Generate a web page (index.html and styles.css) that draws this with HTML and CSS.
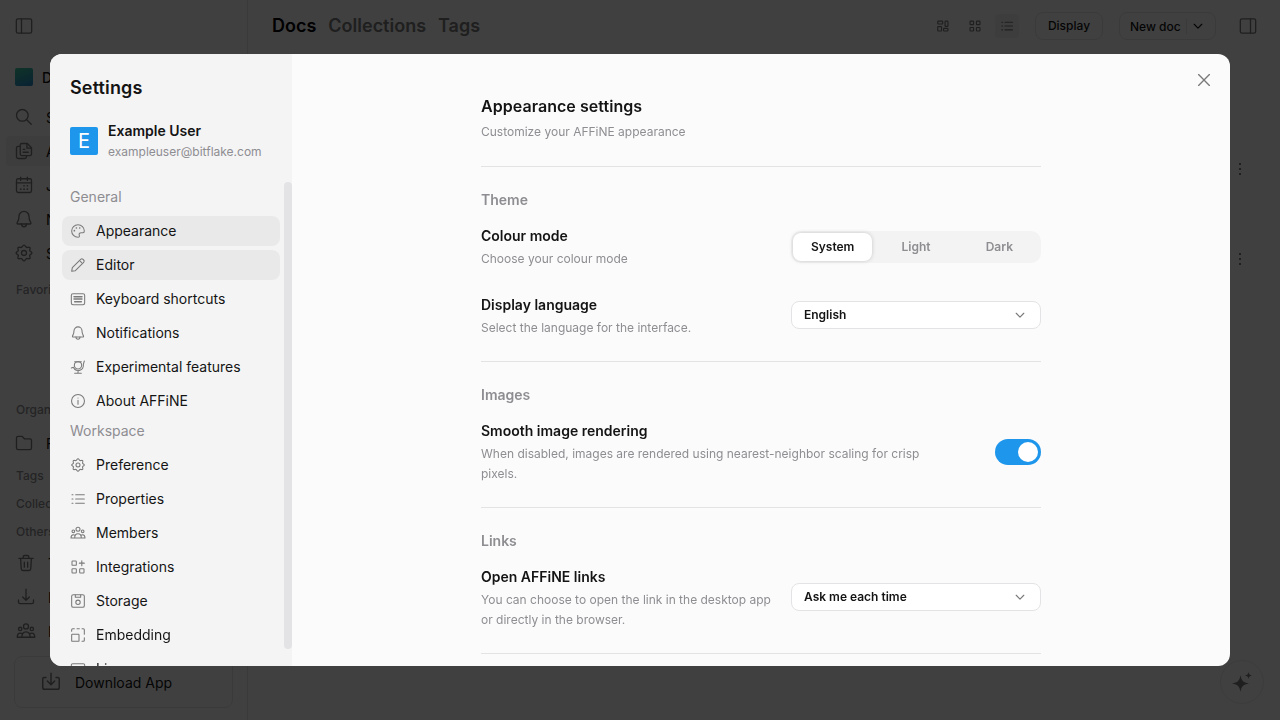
FILE: index.html
```html
<!DOCTYPE html>
<html lang="en">
<head>
    <meta charset="UTF-8">
    <meta name="viewport" content="width=device-width, initial-scale=1.0">
    <title>AFFiNE</title>
    <link rel="stylesheet" href="styles.css">
</head>
<body>
    <!-- icon set -->
    <svg class="sprite">
        <symbol id="i-panel-left" viewBox="0 0 24 24"><rect x="2.8" y="3.500" width="18.4" height="17" rx="2"/><path d="M9 3.500v17"/></symbol>
        <symbol id="i-panel-right" viewBox="0 0 24 24"><rect x="2.8" y="3.500" width="18.4" height="17" rx="2"/><path d="M15 3.500v17"/></symbol>
        <symbol id="i-search" viewBox="0 0 24 24"><circle cx="10" cy="10" r="7"/><path d="M15.2 15.2l5.500 5.500"/></symbol>
        <symbol id="i-docs" viewBox="0 0 24 24"><path d="M7 6.500H5a2 2 0 0 0-2 2V19a2 2 0 0 0 2 2h8a2 2 0 0 0 2-2v-1.500"/><path d="M9.500 3H16l5 5v7.500a2 2 0 0 1-2 2H9.500a2 2 0 0 1-2-2V5a2 2 0 0 1 2-2z"/><path d="M15.500 3.500v5h5M11 10h2M11 13.500h6"/></symbol>
        <symbol id="i-journal" viewBox="0 0 24 24"><rect x="3" y="4.500" width="18" height="16.500" rx="2"/><path d="M3 9.500h18M8 2.500v4M16 2.500v4"/><path d="M12 13h.1M16 13h.1M8 17h.1M12 17h.1M16 17h.1" stroke-width="2"/></symbol>
        <symbol id="i-bell" viewBox="0 0 24 24"><path d="M12 2.800a6 6 0 0 0-6 6c0 5-1.500 6.200-2.200 7.500-.4.900 0 1.700 1 1.700h14.400c1 0 1.400-.8 1-1.700C19.500 15 18 13.800 18 8.800a6 6 0 0 0-6-6z"/><path d="M9 18c0 2 1.200 3.300 3 3.300s3-1.300 3-3.300"/></symbol>
        <symbol id="i-gear" viewBox="0 0 24 24"><path d="M12 2.500c1.500 0 1.900 2.300 3 2.800s3-.9 4 .1-.6 2.900-.1 4 2.600 1.100 2.600 2.600-2.100 1.500-2.600 2.600 1.100 3 .1 4-2.900-.4-4 .1-1.500 2.800-3 2.800-1.900-2.300-3-2.800-3 .9-4-.1.600-2.900.1-4-2.600-1.100-2.600-2.600 2.100-1.500 2.600-2.600-1.100-3-.1-4 2.900.4 4-.1 1.500-2.800 3-2.800z"/><circle cx="12" cy="12" r="3"/></symbol>
        <symbol id="i-folder" viewBox="0 0 24 24"><path d="M3 6a2 2 0 0 1 2-2h4.500l3 3H19a2 2 0 0 1 2 2v9a2 2 0 0 1-2 2H5a2 2 0 0 1-2-2z"/></symbol>
        <symbol id="i-trash" viewBox="0 0 24 24"><path d="M3.500 6.500h17M5.500 6.500l.8 12.500a2 2 0 0 0 2 2h7.400a2 2 0 0 0 2-2l.8-12.500M8.500 6.500V5a2 2 0 0 1 2-2h3a2 2 0 0 1 2 2v1.500M10 11v6M14 11v6"/></symbol>
        <symbol id="i-import" viewBox="0 0 24 24"><path d="M12 2.500v13M8 12l4 4 4-4M3 15.500V18a2 2 0 0 0 2 2h14a2 2 0 0 0 2-2v-2.500"/></symbol>
        <symbol id="i-download" viewBox="0 0 24 24"><path d="M12 2.500v12M8 11l4 4 4-4M6.500 7H4.500A1.500 1.500 0 0 0 3 8.500V18a2 2 0 0 0 2 2h14a2 2 0 0 0 2-2V8.500A1.500 1.500 0 0 0 19.500 7H17.500"/></symbol>
        <symbol id="i-people" viewBox="0 0 24 24"><circle cx="12" cy="6.500" r="3"/><circle cx="5" cy="9.500" r="2"/><circle cx="19" cy="9.500" r="2"/><path d="M7 19.500c0-4 2-6.500 5-6.500s5 2.500 5 6.500zM7 19.500H1.500c0-3 1.300-5 3.500-5 1 0 1.900.3 2.500 1M17 19.500h5.500c0-3-1.300-5-3.500-5-1 0-1.900.3-2.500 1"/></symbol>
        <symbol id="i-masonry" viewBox="0 0 24 24"><rect x="3" y="3.500" width="8.500" height="5" rx="1"/><rect x="3" y="13" width="6.500" height="7.500" rx="1"/><rect x="15.500" y="3.500" width="5" height="9" rx="1"/><rect x="13" y="16" width="7.500" height="4.500" rx="1"/></symbol>
        <symbol id="i-grid" viewBox="0 0 24 24"><rect x="3.500" y="3.500" width="6" height="6" rx="1"/><rect x="14.500" y="3.500" width="6" height="6" rx="1"/><rect x="3.500" y="14.500" width="6" height="6" rx="1"/><rect x="14.500" y="14.500" width="6" height="6" rx="1"/></symbol>
        <symbol id="i-list" viewBox="0 0 24 24"><path d="M8.500 5.500h13M8.500 12h13M8.500 18.500h13M3 5.500h1.500M3 12h1.500M3 18.500h1.500"/></symbol>
        <symbol id="i-down" viewBox="0 0 24 24"><path d="M5.500 9l6.500 6.500L18.500 9"/></symbol>
        <symbol id="i-close" viewBox="0 0 24 24"><path d="M5.500 5.500l13 13M18.500 5.500l-13 13"/></symbol>
        <symbol id="i-dots" viewBox="0 0 16 16"><path class="solid" d="M7 2h2v2H7zM7 7h2v2H7zM7 12h2v2H7z"/></symbol>
        <symbol id="i-palette" viewBox="0 0 24 24"><path d="M12 2.500a9.500 9.500 0 0 0 0 19c2 0 2.500-1.300 2-2.700-1-2.800.3-4.300 3-4.300h2.500c1.300 0 2-.9 2-2.500A9.500 9.500 0 0 0 12 2.500z"/><path d="M6.500 11.500h.1M9.500 7.500h.1M14.500 7.500h.1" stroke-width="2.500"/></symbol>
        <symbol id="i-pencil" viewBox="0 0 24 24"><path d="M3.500 16L16 3.500a2.500 2.500 0 0 1 3.500 0l1 1a2.500 2.500 0 0 1 0 3.500L8 20.500l-5.500 1zM15.500 6.500l2 2"/></symbol>
        <symbol id="i-keyboard" viewBox="0 0 24 24"><rect x="2" y="4" width="20" height="16.500" rx="2.500"/><path d="M6 8.500h12M6 12h12M7 16h10" stroke-width="2.200"/></symbol>
        <symbol id="i-lab" viewBox="0 0 24 24"><circle cx="12" cy="9.500" r="5.500"/><path d="M2 13.500l3-1c2 4.500 6.500 6 10 4.500 4-1.700 5.500-5 5-9l1.500-5M7 4h10M12 17.500V21M7 21.500h10"/></symbol>
        <symbol id="i-info" viewBox="0 0 24 24"><circle cx="12" cy="12" r="9.700"/><path d="M12 11v6M12 7.500v.1"/></symbol>
        <symbol id="i-integrations" viewBox="0 0 24 24"><rect x="3" y="3" width="6.500" height="6.500" rx="1"/><rect x="3" y="14.500" width="6.500" height="6.500" rx="1"/><rect x="14.500" y="14.500" width="6.500" height="6.500" rx="1"/><path d="M17.700 2.500v7.500M14 6.200h7.500"/></symbol>
        <symbol id="i-storage" viewBox="0 0 24 24"><rect x="2.500" y="2.500" width="19" height="19" rx="2.500"/><circle cx="12" cy="14" r="3.300"/><path d="M8 3v3.500h8V3"/></symbol>
        <symbol id="i-embed" viewBox="0 0 24 24"><rect x="2.500" y="11" width="11" height="10.500" rx="1"/><path d="M2.500 6.500V4A1.500 1.500 0 0 1 4 2.500h2.500M10.500 2.500h3.500M18 2.500h2A1.500 1.500 0 0 1 21.500 4v7M21.500 16v4a1.500 1.500 0 0 1-1.500 1.500h-2"/></symbol>
        <symbol id="i-license" viewBox="0 0 24 24"><rect x="2" y="4" width="20" height="16" rx="2"/><path d="M6 9h12"/></symbol>
        <symbol id="i-ai" viewBox="0 0 24 24"><path class="solid" d="M10.500 5c1 5.800 2.700 7.500 8.500 8.500-5.800 1-7.500 2.700-8.500 8.500-1-5.800-2.700-7.500-8.500-8.500 5.800-1 7.500-2.700 8.500-8.500zM18.500 2c.5 2.400 1.100 3 3.500 3.500-2.400.5-3 1.100-3.500 3.500-.5-2.400-1.100-3-3.500-3.500 2.400-.5 3-1.100 3.500-3.500z"/></symbol>
    </svg>

    <!-- app behind the dialog -->
    <div class="app">
        <aside class="nav">
            <div class="nav-top"><svg class="icon icon-20"><use href="#i-panel-left"/></svg></div>
            <div class="workspace"><span class="workspace-avatar"></span><b>Demo</b></div>
            <div class="nav-list">
                <a class="nav-item"><svg class="icon icon-20"><use href="#i-search"/></svg>Search</a>
                <a class="nav-item active"><svg class="icon icon-20"><use href="#i-docs"/></svg>All docs</a>
                <a class="nav-item"><svg class="icon icon-20"><use href="#i-journal"/></svg>Journals</a>
                <a class="nav-item"><svg class="icon icon-20"><use href="#i-bell"/></svg>Notifications</a>
                <a class="nav-item"><svg class="icon icon-20"><use href="#i-gear"/></svg>Settings</a>
            </div>
            <div class="nav-label favorites">Favorites</div>
            <div class="nav-label">Organize</div>
            <a class="nav-item folder"><svg class="icon icon-20"><use href="#i-folder"/></svg>Folder</a>
            <div class="nav-label">Tags</div>
            <div class="nav-label">Collections</div>
            <div class="nav-label">Others</div>
            <div class="nav-list others">
                <a class="nav-item"><svg class="icon icon-20"><use href="#i-trash"/></svg>Trash</a>
                <a class="nav-item"><svg class="icon icon-20"><use href="#i-import"/></svg>Import</a>
                <a class="nav-item"><svg class="icon icon-20"><use href="#i-people"/></svg>Invite</a>
            </div>
            <div class="download"><svg class="icon icon-22"><use href="#i-download"/></svg>Download App</div>
        </aside>
        <main class="main">
            <header class="topbar">
                <div class="tabs"><span class="tab current">Docs</span><span class="tab">Collections</span><span class="tab">Tags</span></div>
                <div class="views">
                    <span class="view"><svg class="icon icon-14"><use href="#i-masonry"/></svg></span>
                    <span class="view"><svg class="icon icon-14"><use href="#i-grid"/></svg></span>
                    <span class="view selected"><svg class="icon icon-14"><use href="#i-list"/></svg></span>
                </div>
                <button class="btn display">Display</button>
                <button class="btn new-doc"><span>New doc</span><svg class="icon icon-14"><use href="#i-down"/></svg></button>
                <svg class="icon icon-20"><use href="#i-panel-right"/></svg>
            </header>
            <div class="rows">
                <svg class="icon icon-16"><use href="#i-dots"/></svg>
                <svg class="icon icon-16"><use href="#i-dots"/></svg>
            </div>
            <div class="ai"><svg class="icon icon-24"><use href="#i-ai"/></svg></div>
        </main>
    </div>

    <!-- settings dialog -->
    <div class="overlay">
        <div class="modal">
            <aside class="sidebar">
                <h1>Settings</h1>
                <div class="user">
                    <span class="avatar">E</span>
                    <div>
                        <div class="user-name">Example User</div>
                        <div class="user-mail">exampleuser@bitflake.com</div>
                    </div>
                </div>
                <div class="menu">
                    <div class="menu-list">
                        <div class="menu-label">General</div>
                        <a class="menu-item active"><svg class="icon icon-16"><use href="#i-palette"/></svg><span>Appearance</span></a>
                        <a class="menu-item active"><svg class="icon icon-16"><use href="#i-pencil"/></svg><span>Editor</span></a>
                        <a class="menu-item"><svg class="icon icon-16"><use href="#i-keyboard"/></svg><span>Keyboard shortcuts</span></a>
                        <a class="menu-item"><svg class="icon icon-16"><use href="#i-bell"/></svg><span>Notifications</span></a>
                        <a class="menu-item"><svg class="icon icon-16"><use href="#i-lab"/></svg><span>Experimental features</span></a>
                        <a class="menu-item"><svg class="icon icon-16"><use href="#i-info"/></svg><span>About AFFiNE</span></a>
                        <div class="menu-label">Workspace</div>
                        <a class="menu-item"><svg class="icon icon-16"><use href="#i-gear"/></svg><span>Preference</span></a>
                        <a class="menu-item"><svg class="icon icon-16"><use href="#i-list"/></svg><span>Properties</span></a>
                        <a class="menu-item"><svg class="icon icon-16"><use href="#i-people"/></svg><span>Members</span></a>
                        <a class="menu-item"><svg class="icon icon-16"><use href="#i-integrations"/></svg><span>Integrations</span></a>
                        <a class="menu-item"><svg class="icon icon-16"><use href="#i-storage"/></svg><span>Storage</span></a>
                        <a class="menu-item"><svg class="icon icon-16"><use href="#i-embed"/></svg><span>Embedding</span></a>
                        <a class="menu-item"><svg class="icon icon-16"><use href="#i-license"/></svg><span>License</span></a>
                    </div>
                    <div class="scrollbar"></div>
                </div>
            </aside>
            <section class="content">
                <button class="close"><svg class="icon icon-20"><use href="#i-close"/></svg></button>
                <div class="page">
                    <div class="page-head">
                        <h2>Appearance settings</h2>
                        <p>Customize your AFFiNE appearance</p>
                    </div>
                    <div class="group">
                        <h3>Theme</h3>
                        <div class="row">
                            <div class="text"><h4>Colour mode</h4><p>Choose your colour mode</p></div>
                            <div class="segmented"><span class="on">System</span><span>Light</span><span>Dark</span></div>
                        </div>
                        <div class="row">
                            <div class="text"><h4>Display language</h4><p>Select the language for the interface.</p></div>
                            <div class="select"><span>English</span><svg class="icon icon-14"><use href="#i-down"/></svg></div>
                        </div>
                    </div>
                    <div class="group">
                        <h3>Images</h3>
                        <div class="row">
                            <div class="text"><h4>Smooth image rendering</h4><p>When disabled, images are rendered using nearest-neighbor scaling for crisp pixels.</p></div>
                            <div class="switch"></div>
                        </div>
                    </div>
                    <div class="group">
                        <h3>Links</h3>
                        <div class="row">
                            <div class="text"><h4>Open AFFiNE links</h4><p>You can choose to open the link in the desktop app or directly in the browser.</p></div>
                            <div class="select"><span>Ask me each time</span><svg class="icon icon-14"><use href="#i-down"/></svg></div>
                        </div>
                    </div>
                    <div class="group"></div>
                </div>
            </section>
        </div>
    </div>
</body>
</html>
```
FILE: styles.css
```css
* {
    box-sizing: border-box;
}
body {
    margin: 0;
    height: 720px;
    overflow: hidden;
    font-family: Inter, "Liberation Sans", sans-serif;
    font-size: 14px;
    color: #141414;
}
h1, h2, h3, h4, p {
    margin: 0;
}
button {
    font-family: inherit;
    color: inherit;
}
.sprite {
    display: none;
}

/* icons */
.icon {
    flex: none;
    display: block;
    fill: none;
    stroke: #7a7a7a;
    stroke-width: 1.6;
    stroke-linecap: round;
    stroke-linejoin: round;
}
.icon-14 { width: 14px; height: 14px; }
.icon-16 { width: 16px; height: 16px; }
.icon-20 { width: 20px; height: 20px; }
.icon-22 { width: 22px; height: 22px; }
.icon-24 { width: 24px; height: 24px; }
.solid {
    fill: #7a7a7a;
    stroke: none;
}

/* app */
.app {
    display: flex;
    height: 720px;
    background-color: #fbfbfc;
}
.nav {
    width: 248px;
    height: 720px;
    flex: none;
    border-right: 1px solid #e3e2e4;
}
.nav-top {
    height: 52px;
    padding: 16px 14px;
}
.workspace {
    display: flex;
    align-items: center;
    gap: 9px;
    height: 50px;
    padding-left: 15px;
    white-space: nowrap;
}
.workspace b {
    font-weight: 500;
}
.workspace-avatar {
    width: 18px;
    height: 18px;
    border-radius: 2px;
    background: linear-gradient(160deg, #3cc79b, #2585c9);
}
.nav-list {
    display: flex;
    flex-direction: column;
    gap: 4px;
    padding: 0 6px;
}
.nav-item {
    display: flex;
    align-items: center;
    gap: 12px;
    height: 30px;
    padding-left: 8px;
    border-radius: 4px;
}
.nav-item.active {
    background-color: #ededee;
}
.nav-label {
    height: 28px;
    padding-left: 16px;
    line-height: 28px;
    font-size: 12px;
    font-weight: 500;
    color: #8e8d91;
}
.favorites {
    margin-top: 8px;
    margin-bottom: 92px;
}
.nav-item.folder {
    margin: 4px 6px;
}
.others {
    margin-top: 2px;
    padding-left: 8px;
}
.download {
    display: flex;
    align-items: center;
    gap: 13px;
    width: 219px;
    height: 52px;
    margin: 10px 0 0 14px;
    padding-left: 25px;
    border: 1px solid #e3e2e4;
    border-radius: 8px;
}
.main {
    flex: 1;
    display: flex;
    flex-direction: column;
}
.topbar {
    display: flex;
    align-items: center;
    height: 52px;
    padding: 0 22px 0 24px;
}
.tabs {
    display: flex;
    gap: 12px;
    margin-right: auto;
    padding-bottom: 1px;
    font-size: 18px;
    font-weight: 600;
}
.tab {
    color: #7a7a7a;
}
.tab.current {
    color: #000;
}
.views {
    display: flex;
    gap: 8px;
    margin-right: 16px;
}
.views .icon {
    stroke-width: 2;
}
.view {
    display: grid;
    place-items: center;
    width: 24px;
    height: 24px;
    border-radius: 4px;
}
.view.selected {
    background-color: #f0f0f1;
}
.btn {
    height: 28px;
    padding: 0 12px;
    border: 1px solid #e3e2e4;
    border-radius: 8px;
    background: none;
    font-size: 12px;
    font-weight: 500;
}
.display {
    width: 68px;
    margin-right: 16px;
    padding: 0 0 1px;
}
.new-doc {
    display: flex;
    align-items: center;
    width: 97px;
    margin-right: 22px;
    padding: 0 10px;
}
.new-doc span {
    margin-right: 4px;
    padding-right: 5px;
    border-right: 1px solid #e3e2e4;
    white-space: nowrap;
}
.new-doc .icon {
    stroke: #141414;
    stroke-width: 2;
}
.rows {
    display: flex;
    flex-direction: column;
    align-items: flex-end;
    gap: 74px;
    padding: 109px 32px 0 0;
}
.ai {
    display: grid;
    place-items: center;
    width: 44px;
    height: 44px;
    margin: auto 16px 16px auto;
    border: 1px solid #e9e9ea;
    border-radius: 50%;
}

/* dialog */
.overlay {
    position: fixed;
    inset: 0;
    display: flex;
    align-items: center;
    justify-content: center;
    background-color: rgba(0, 0, 0, 0.745);
}
.modal {
    display: flex;
    width: 1180px;
    height: 612px;
    overflow: hidden;
    border-radius: 12px;
    background-color: #fbfbfc;
}
.sidebar {
    flex: none;
    display: flex;
    flex-direction: column;
    width: 242px;
    background-color: #f4f4f5;
}
.sidebar h1 {
    height: 46px;
    padding: 20px 20px 0;
    line-height: 27px;
    font-size: 18px;
    font-weight: 600;
    letter-spacing: 0.15px;
}
.user {
    display: flex;
    align-items: center;
    gap: 10px;
    height: 50px;
    margin: 16px 0;
    padding-left: 20px;
}
.avatar {
    width: 28px;
    height: 28px;
    border-radius: 2px;
    background-color: #1e96eb;
    color: #fff;
    font-size: 20px;
    line-height: 28px;
    text-align: center;
}
.user-name {
    line-height: 22px;
    font-size: 14px;
    font-weight: 600;
}
.user-mail {
    line-height: 20px;
    font-size: 12px;
    color: #8e8d91;
}
.menu {
    flex: 1;
    display: flex;
    min-height: 0;
}
.menu-list {
    flex: 1;
    display: flex;
    flex-direction: column;
    padding: 0 4px 0 12px;
}
.menu-label {
    flex: none;
    height: 30px;
    margin-bottom: 4px;
    padding-left: 8px;
    line-height: 30px;
    font-size: 14px;
    color: #8e8d91;
}
.menu-item {
    flex: none;
    display: flex;
    align-items: center;
    gap: 10px;
    height: 30px;
    padding-left: 8px;
    border-radius: 8px;
    font-size: 14px;
}
.menu-item span {
    line-height: 22px;
}
.menu-item + .menu-item {
    margin-top: 4px;
}
.menu-item.active {
    background-color: #e9e9ea;
}
.scrollbar {
    width: 8px;
    height: 467px;
    border-radius: 4px;
    background-color: #e3e2e4;
}
.content {
    position: relative;
    flex: 1;
}
.close {
    position: absolute;
    top: 16px;
    right: 16px;
    padding: 0;
    border: none;
    background: none;
}
.page {
    width: 560px;
    margin-left: 189px;
}
.page-head {
    height: 112px;
    padding-top: 40px;
}
.page-head h2 {
    line-height: 24px;
    font-size: 16px;
    font-weight: 600;
    letter-spacing: 0.05px;
}
.page-head p {
    margin-top: 4px;
}
.page p {
    line-height: 20px;
    font-size: 12px;
    color: #8e8d91;
}
.group {
    padding: 23px 0;
    border-top: 1px solid #e3e2e4;
}
.group h3 {
    margin-bottom: 15px;
    line-height: 20px;
    font-size: 14px;
    font-weight: 600;
    color: #8e8d91;
}
.row {
    display: flex;
    align-items: center;
    justify-content: space-between;
}
.row + .row {
    margin-top: 25px;
}
.row h4 {
    margin-bottom: 2px;
    line-height: 22px;
    font-size: 14px;
    font-weight: 600;
}
.text {
    max-width: 450px;
    padding-right: 10px;
}
.segmented {
    flex: none;
    display: flex;
    gap: 4px;
    width: 250px;
    height: 32px;
    padding: 2px;
    border-radius: 10px;
    background-color: #f3f3f3;
    font-size: 12px;
    font-weight: 600;
    line-height: 28px;
    text-align: center;
    color: #8e8d91;
}
.segmented span {
    flex: 1;
}
.segmented .on {
    border-radius: 8px;
    background-color: #fff;
    color: #141414;
    box-shadow: 0 0 4px rgba(0, 0, 0, 0.18);
}
.select {
    flex: none;
    display: flex;
    align-items: center;
    justify-content: space-between;
    width: 250px;
    height: 28px;
    margin-bottom: 2px;
    padding: 0 13px 0 12px;
    border: 1px solid #e3e2e4;
    border-radius: 8px;
    background-color: #fff;
    font-size: 12px;
    font-weight: 600;
}
.select span {
    line-height: 20px;
}
.select .icon {
    stroke-width: 2;
}
.switch {
    flex: none;
    display: flex;
    justify-content: flex-end;
    width: 46px;
    height: 26px;
    padding: 3px;
    border-radius: 13px;
    background-color: #1e96eb;
}
.switch::after {
    content: "";
    width: 20px;
    height: 20px;
    border-radius: 50%;
    background-color: #fff;
}
```
